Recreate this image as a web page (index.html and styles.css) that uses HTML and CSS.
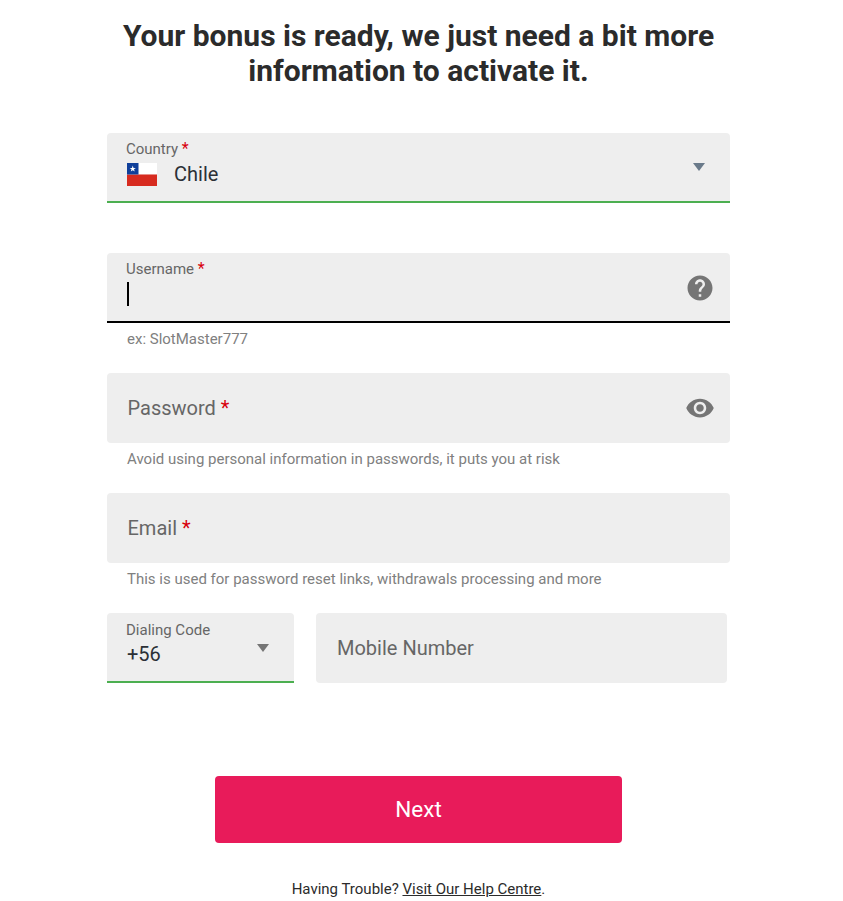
FILE: index.html
```html
<!DOCTYPE html>
<html lang="en">
<head>
    <meta charset="UTF-8">
    <meta name="viewport" content="width=device-width, initial-scale=1.0">
    <title>Activate your bonus</title>
    <link rel="stylesheet" href="styles.css">
</head>
<body>
    <div class="page">
        <h1>Your bonus is ready, we just need a bit more information to activate it.</h1>

        <form class="signup">
            <div class="form-group">
                <div class="field field-select">
                    <div class="field-text">
                        <span class="field-label">Country <em>*</em></span>
                        <span class="field-value">
                            <svg class="flag" viewBox="0 0 30 23" width="30" height="23">
                                <rect width="30" height="11.5" fill="#fff"/>
                                <rect y="11.5" width="30" height="11.5" fill="#d72b1f"/>
                                <rect width="11.5" height="11.5" fill="#0f3f9a"/>
                                <polygon points="5.75,2.6 6.5,4.9 8.9,4.9 7,6.3 7.7,8.6 5.75,7.2 3.8,8.6 4.5,6.3 2.6,4.9 5,4.9" fill="#fff"/>
                            </svg>
                            Chile
                        </span>
                    </div>
                    <span class="arrow arrow-slate"></span>
                </div>
            </div>

            <div class="form-group">
                <div class="field field-active">
                    <div class="field-text">
                        <span class="field-label">Username <em>*</em></span>
                        <span class="caret"></span>
                    </div>
                    <svg class="icon" viewBox="0 0 24 24" width="30" height="30">
                        <path fill="#757575" d="M12 2C6.48 2 2 6.48 2 12s4.48 10 10 10 10-4.48 10-10S17.52 2 12 2zm1 17h-2v-2h2v2zm2.07-7.75l-.9.92C13.45 12.9 13 13.5 13 15h-2v-.5c0-1.1.45-2.1 1.17-2.83l1.24-1.26c.37-.36.59-.86.59-1.41 0-1.1-.9-2-2-2s-2 .9-2 2H8c0-2.21 1.79-4 4-4s4 1.79 4 4c0 .88-.36 1.68-.93 2.25z"/>
                    </svg>
                </div>
                <div class="hint">ex: SlotMaster777</div>
            </div>

            <div class="form-group">
                <div class="field">
                    <span class="placeholder">Password <em>*</em></span>
                    <svg class="icon icon-eye" viewBox="0 0 24 24" width="30" height="30">
                        <path fill="#757575" d="M12 4.5C7 4.5 2.73 7.61 1 12c1.73 4.39 6 7.5 11 7.5s9.27-3.11 11-7.5c-1.73-4.39-6-7.5-11-7.5zM12 17c-2.76 0-5-2.24-5-5s2.24-5 5-5 5 2.24 5 5-2.24 5-5 5zm0-8c-1.66 0-3 1.34-3 3s1.34 3 3 3 3-1.34 3-3-1.34-3-3-3z"/>
                    </svg>
                </div>
                <div class="hint">Avoid using personal information in passwords, it puts you at risk</div>
            </div>

            <div class="form-group">
                <div class="field">
                    <span class="placeholder">Email <em>*</em></span>
                </div>
                <div class="hint">This is used for password reset links, withdrawals processing and more</div>
            </div>

            <div class="phone-row">
                <div class="field field-select field-code">
                    <div class="field-text">
                        <span class="field-label">Dialing Code</span>
                        <span class="field-value">+56</span>
                    </div>
                    <span class="arrow"></span>
                </div>
                <div class="field field-phone">
                    <span class="placeholder">Mobile Number</span>
                </div>
            </div>

            <button type="submit" class="btn">Next</button>
        </form>

        <p class="help">Having Trouble? <a href="#">Visit Our Help Centre</a>.</p>
    </div>
</body>
</html>
```

FILE: styles.css
```css
* {
    margin: 0;
    padding: 0;
    box-sizing: border-box;
}

body {
    font-family: 'Roboto', 'Liberation Sans', sans-serif;
    background: #fff;
    color: #2b2b2b;
}

.page {
    width: 837px;
    padding: 18px 107px 0;
}

h1 {
    font-size: 30px;
    line-height: 35px;
    font-weight: 700;
    text-align: center;
    color: #2b2b2b;
    margin: 0 -10px 45px;
}

.form-group {
    height: 120px;
}

.field {
    height: 70px;
    background: #eeeeee;
    border-radius: 4px;
    display: flex;
    align-items: center;
    justify-content: space-between;
    padding: 0 16px 0 20px;
}

.field-select,
.field-active {
    border-radius: 4px 4px 0 0;
}

.field-select {
    border-bottom: 2px solid #4caf50;
}

.field-active {
    border-bottom: 2px solid #000;
}

.field-text {
    display: flex;
    flex-direction: column;
    align-self: flex-start;
    padding-top: 7px;
    margin-left: -1px;
}

.field-label {
    font-size: 15px;
    line-height: 18px;
    color: #666;
}

.field-label em {
    font-size: 16px;
    line-height: 0;
}

em {
    font-style: normal;
    color: #d8000c;
}

.field-value {
    display: flex;
    align-items: center;
    font-size: 20px;
    line-height: 30px;
    color: #2b3036;
    margin: 1px 0 0 1px;
}

.flag {
    margin-right: 17px;
}

.field-code .field-text {
    padding-top: 8px;
}

.field-code .field-value {
    margin-top: 0;
}

.caret {
    width: 2px;
    height: 24px;
    background: #000;
    margin: 4px 0 0 1px;
}

.placeholder {
    font-size: 20px;
    color: #666;
    margin-left: 0.5px;
}

.field-phone .placeholder {
    margin-left: 1px;
}

.arrow {
    width: 0;
    height: 0;
    border-left: 6px solid transparent;
    border-right: 6px solid transparent;
    border-top: 8px solid #757575;
    margin-right: 9px;
}

.arrow-slate {
    border-top-color: #6a7a8a;
}

.field-code .arrow {
    margin-top: 2px;
}

.icon {
    margin-right: -1px;
    margin-top: 1px;
}

.icon-eye {
    margin-top: 0;
}

.hint {
    font-size: 15px;
    line-height: 18px;
    color: #808080;
    padding: 7px 0 0 20px;
}

.phone-row {
    display: flex;
    gap: 22px;
    margin-bottom: 93px;
}

.field-code {
    width: 187px;
    padding-right: 16px;
}

.field-phone {
    width: 411px;
}

.btn {
    display: block;
    width: 407px;
    height: 67px;
    margin: 0 auto;
    padding-bottom: 2px;
    border: none;
    border-radius: 4px;
    background: #e81b5a;
    color: #fff;
    font-family: inherit;
    font-size: 22.5px;
    cursor: pointer;
}

.help {
    margin-top: 37px;
    text-align: center;
    font-size: 15px;
    line-height: 18px;
    color: #2b2b2b;
    padding-bottom: 4px;
}

.help a {
    color: #2b2b2b;
}
```
